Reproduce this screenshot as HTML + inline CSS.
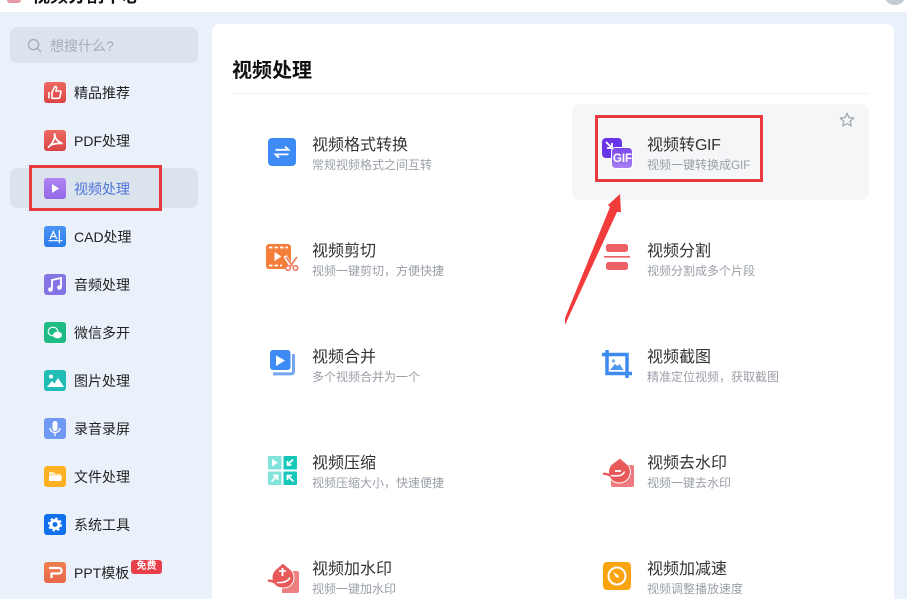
<!DOCTYPE html>
<html lang="zh"><head><meta charset="utf-8"><style>
html,body{margin:0;padding:0;width:907px;height:599px;overflow:hidden;background:#ebf1fa;font-family:"Liberation Sans","Noto Sans CJK SC",sans-serif}
#root{position:relative;width:907px;height:599px;overflow:hidden;background:#ebf1fa}
.a{position:absolute}
#top{left:0;top:0;width:907px;height:12px;background:#fff;overflow:hidden}
#panel{left:212px;top:24px;width:682px;height:590px;background:#fff;border-radius:8px}
.nav{position:absolute;left:74px;font-size:14px;line-height:20px;color:#222;white-space:nowrap}
.ic{position:absolute;left:44px;width:22px;height:21px;border-radius:3px}
.ic svg{display:block}
.t1{position:absolute;font-size:16px;line-height:22px;color:#333;white-space:nowrap}
.t2{position:absolute;font-size:12px;line-height:16px;color:#9a9fa8;white-space:nowrap}
svg.a{overflow:visible}
</style></head><body><div id="root">
<div class="a" id="top">
<div class="a" style="left:7px;top:-7px;width:14px;height:10px;border-radius:3px;background:linear-gradient(#c9c6ee,#ee8f9a)"></div>
<div class="a" style="left:32px;top:-15px;font-size:18px;line-height:22px;font-weight:bold;color:#111;white-space:nowrap">视频分割中心</div>
<div class="a" style="left:885px;top:-11px;width:20px;height:16px;border-radius:50%;background:#c3cbd3"></div>
</div>
<div class="a" id="panel"></div>

<div class="a" style="left:10px;top:27px;width:188px;height:36px;border-radius:7px;background:#dbe3ec"></div>
<svg class="a" style="left:27px;top:38px" width="15" height="15" viewBox="0 0 16 16" fill="none" stroke="#a3acb6" stroke-width="1.400"><circle cx="7" cy="7" r="5.400"/><path d="M11 11l4 4"/></svg>
<div class="a" style="left:50px;top:36px;font-size:14px;line-height:20px;color:#a5adb6">想搜什么?</div>
<div class="a" style="left:10px;top:168px;width:188px;height:40px;border-radius:7px;background:#dbe3ec"></div>

<div class="ic" style="top:82px;background:linear-gradient(#ef6a62,#da4444)"><svg width="22" height="21" viewBox="0 0 22 21" fill="none" stroke="#fff" stroke-width="1.600"><path d="M5 10v6.500M8 10l3-5.500c1.200 0 2 .9 1.600 2.200L12 9h4.200c.6 0 1 .5.8 1.200l-1.300 5.300c-.1.500-.5.800-1 .800H8z"/></svg></div>
<div class="nav" style="top:83px">精品推荐</div>
<div class="ic" style="top:130px;background:linear-gradient(#ef6a62,#da4444)"><svg width="22" height="21" viewBox="0 0 22 21" fill="none" stroke="#fff" stroke-width="1.800"><path d="M10.500 3.500c-.5 3.500 2.500 8 8 10M10.500 3.500c1.500 4-2.500 11-6.500 14M6 15.500c3-1.500 7-2.500 12.500-2"/></svg></div>
<div class="nav" style="top:131px">PDF处理</div>
<div class="ic" style="top:178px;background:linear-gradient(#b083f5,#9468e6)"><svg width="22" height="21" viewBox="0 0 22 21"><path d="M8 6l7 4.500-7 4.500z" fill="#fff"/></svg></div>
<div class="nav" style="top:179px;color:#4f74d8">视频处理</div>
<div class="ic" style="top:226px;background:linear-gradient(#4a94f5,#2a7be8)"><svg width="22" height="21" viewBox="0 0 22 21" fill="none" stroke="#fff" stroke-width="1.200"><path d="M4.500 14.700h14M15.300 4v13.500M6 13l3.300-7.500L12.700 13M7 10.500h4.700"/></svg></div>
<div class="nav" style="top:227px">CAD处理</div>
<div class="ic" style="top:274px;background:#8574e3"><svg width="22" height="21" viewBox="0 0 22 21"><path d="M8 15V6l9-2v9" fill="none" stroke="#fff" stroke-width="1.800"/><circle cx="6.500" cy="15.500" r="2.300" fill="#fff"/><circle cx="15.500" cy="13.500" r="2.300" fill="#fff"/></svg></div>
<div class="nav" style="top:275px">音频处理</div>
<div class="ic" style="top:322px;background:#1fbb85"><svg width="22" height="21" viewBox="0 0 22 21"><ellipse cx="9" cy="9.500" rx="4.800" ry="4.300" fill="none" stroke="#fff" stroke-width="1.100"/><ellipse cx="13.500" cy="13" rx="4.500" ry="3.300" fill="#fff"/></svg></div>
<div class="nav" style="top:323px">微信多开</div>
<div class="ic" style="top:370px;background:#1fbdb5"><svg width="22" height="21" viewBox="0 0 22 21" fill="#fff"><circle cx="7" cy="6.500" r="2"/><path d="M3 17l5-6 2.500 2.500L14 8l6 9z"/></svg></div>
<div class="nav" style="top:371px">图片处理</div>
<div class="ic" style="top:418px;background:#7099f5"><svg width="22" height="21" viewBox="0 0 22 21"><rect x="8.500" y="3" width="5" height="10" rx="2.500" fill="#fff"/><path d="M6 10c0 6 10 6 10 0M11 14.500V18" fill="none" stroke="#fff" stroke-width="1.300"/></svg></div>
<div class="nav" style="top:419px">录音录屏</div>
<div class="ic" style="top:466px;background:#fdb022"><svg width="22" height="21" viewBox="0 0 22 21" fill="#ffe9b8"><path d="M5 6h5l1.500 2H17v7H5z"/><path d="M5 10h13l-1 5H5z" fill="#fff"/></svg></div>
<div class="nav" style="top:467px">文件处理</div>
<div class="ic" style="top:514px;background:#1170ee"><svg width="22" height="21" viewBox="0 0 22 21"><circle cx="11" cy="10.500" r="4" fill="none" stroke="#fff" stroke-width="3"/><circle cx="11" cy="10.500" r="6.300" fill="none" stroke="#fff" stroke-width="1.500" stroke-dasharray="2.500 2.450"/></svg></div>
<div class="nav" style="top:515px">系统工具</div>
<div class="ic" style="top:562px;background:linear-gradient(#f08050,#e8694a)"><svg width="22" height="21" viewBox="0 0 22 21" fill="none" stroke="#fff" stroke-width="2.200"><path d="M5 6h10c3.500 0 3.500 5.500 0 5.500H7.500V16"/></svg></div>
<div class="nav" style="top:563px">PPT模板</div>
<div class="a" style="left:131px;top:560px;width:31px;height:14px;border-radius:3px;background:#e8404a;color:#fff;font-size:10px;line-height:14px;text-align:center;font-weight:bold">免费</div>

<div class="a" style="left:232px;top:57px;font-size:20px;line-height:28px;font-weight:bold;color:#111">视频处理</div>
<div class="a" style="left:232px;top:93px;width:637px;height:1px;background:#f0f1f3"></div>
<div class="a" style="left:572px;top:104px;width:297px;height:96px;border-radius:8px;background:#f5f6f8"></div>
<svg class="a" style="left:839px;top:112px" width="16" height="16" viewBox="0 0 16 16"><path d="M8 1.200l2 4.400 4.800.5-3.600 3.200 1 4.700L8 11.600 3.800 14l1-4.700L1.200 6.100 6 5.600z" fill="none" stroke="#9ea4ad" stroke-width="1.200" stroke-linejoin="round"/></svg>

<!-- icons: main -->
<svg class="a" style="left:268px;top:138px" width="28" height="28" viewBox="0 0 28 28"><rect width="28" height="28" rx="4" fill="#3e8bf5"/><path d="M7.500 11.800h13l-3.500-3.300M20.500 16.400h-13l3.500 3.300" fill="none" stroke="#fff" stroke-width="1.800"/></svg>
<svg class="a" style="left:266px;top:244px" width="33" height="27" viewBox="0 0 33 27"><rect width="25" height="25" rx="3" fill="#f57f3a"/><path d="M3 3.500h19M3 21.500h13" stroke="#fff" stroke-width="1.800" stroke-dasharray="3.500 2"/><path d="M8.500 8l7 4.500-7 4.500z" fill="#fff"/><path d="M19 12l7 11 6-11-6 11z" fill="none" stroke="#fff" stroke-width="3.500"/><path d="M20 13l6.500 9M31 13l-6.500 9" stroke="#ef7b63" stroke-width="1.600"/><circle cx="22" cy="24" r="2.300" fill="#fff" stroke="#ef7b63" stroke-width="1.600"/><circle cx="29.500" cy="24" r="2.300" fill="#fff" stroke="#ef7b63" stroke-width="1.600"/></svg>
<svg class="a" style="left:270px;top:350px" width="26" height="26" viewBox="0 0 26 26"><path d="M23.500 4v17.500c0 1.500-.8 2.400-2.400 2.400H3" fill="none" stroke="#76a6f2" stroke-width="3"/><rect width="20.500" height="20" rx="3" fill="#3e8bf5"/><path d="M6 5.500l9 5-9 5.500z" fill="#fff"/></svg>
<svg class="a" style="left:268px;top:456px" width="29" height="29" viewBox="0 0 29 29"><rect width="13.500" height="13.500" rx="1" fill="#82e3da"/><rect x="15.500" width="13.500" height="13.500" rx="1" fill="#14c7b8"/><rect y="15.500" width="13.500" height="13.500" rx="1" fill="#82e3da"/><rect x="15.500" y="15.500" width="13.500" height="13.500" rx="1" fill="#14c7b8"/><path d="M4 3l6 3.700L4 10.500z" fill="#fff"/><path d="M25 3.500l-5.500 5.500M19.500 5v4h4M3.500 25.500L9.500 19.500M5 19.500h4.500V24M25.500 25.500L19.500 19.500M19.500 24v-4.500H24" fill="none" stroke="#fff" stroke-width="1.800"/></svg>
<svg class="a" style="left:268px;top:563px" width="31" height="30" viewBox="0 0 31 30"><path d="M14 8h15a2 2 0 0 1 2 2v18a2 2 0 0 1-2 2H14z" fill="#ed7f7f"/><path d="M15 0L7 7C1 13 4 25 15 25 26 25 29 13 23 7z" fill="#e85a5a" stroke="#fff" stroke-width="1"/><path d="M0 18c3-1.500 5 1.500 9 1.500" fill="none" stroke="#e85a5a" stroke-width="2.400"/><path d="M9 19.500c6 .5 11-1 13-5" fill="none" stroke="#fff" stroke-width="1.400"/><path d="M11 8h7M14.500 5v8" stroke="#fff" stroke-width="1.800"/></svg>

<svg class="a" style="left:602px;top:138px" width="31" height="31" viewBox="0 0 31 31"><defs><linearGradient id="g" x1="0" y1="0" x2="0" y2="1"><stop offset="0" stop-color="#7b45ea"/><stop offset="1" stop-color="#a883f2"/></linearGradient></defs><rect width="20" height="20" rx="4" fill="#6a35e8"/><path d="M4 4l5.500 5.500M10 5v5H5" fill="none" stroke="#fff" stroke-width="1.800"/><rect x="9.500" y="9.500" width="21" height="21" rx="4" fill="url(#g)" stroke="#fff" stroke-width="1"/></svg>
<div class="a" style="left:612px;top:152px;width:21px;text-align:center;font-size:11.500px;line-height:14px;font-weight:bold;color:#fff">GIF</div>
<svg class="a" style="left:604px;top:244px" width="26" height="26" viewBox="0 0 26 26"><rect x="2" y="0" width="22" height="8" rx="2.500" fill="#ee6166"/><rect x="0" y="12" width="26" height="1.600" fill="#ee6166"/><rect x="2" y="18" width="22" height="8" rx="2.500" fill="#ee6166"/></svg>
<svg class="a" style="left:602px;top:350px" width="30" height="28" viewBox="0 0 30 28"><path d="M0 4.500h25V28M5 0v23.500H30" fill="none" stroke="#3e8bf0" stroke-width="3.500"/><circle cx="11.500" cy="11" r="1.700" fill="#7fb0f2"/><path d="M8 20l5-6 2.500 2 2-2 4 6z" fill="#4e95f0"/></svg>
<svg class="a" style="left:603px;top:458px" width="31" height="29" viewBox="0 0 31 29"><rect x="8" y="7" width="23" height="22" rx="2" fill="#ee7a7f"/><path d="M17 0L9 6C2 12 6 25 16 25 27 25 31 12 24 6z" fill="#e85a5a" stroke="#fff" stroke-width="1"/><path d="M0 16c3-1 5 1 8 1.500" fill="none" stroke="#e85a5a" stroke-width="2.400"/><path d="M8 17.500c6 1 12 .5 13.500-4" fill="none" stroke="#fff" stroke-width="1.400"/><path d="M12 13h6" stroke="#fff" stroke-width="1.800"/></svg>
<svg class="a" style="left:603px;top:562px" width="28" height="28" viewBox="0 0 28 28"><rect width="28" height="28" rx="4" fill="#fca311"/><circle cx="14" cy="14" r="8.500" fill="none" stroke="#fff" stroke-width="2"/><path d="M10 10l5 3 1 3-3-1z" fill="#fff"/></svg>

<!-- labels -->
<div class="t1" style="left:312px;top:135px">视频格式转换</div><div class="t2" style="left:312px;top:157px">常规视频格式之间互转</div>
<div class="t1" style="left:312px;top:241px">视频剪切</div><div class="t2" style="left:312px;top:263px">视频一键剪切，方便快捷</div>
<div class="t1" style="left:312px;top:347px">视频合并</div><div class="t2" style="left:312px;top:369px">多个视频合并为一个</div>
<div class="t1" style="left:312px;top:453px">视频压缩</div><div class="t2" style="left:312px;top:475px">视频压缩大小，快速便捷</div>
<div class="t1" style="left:312px;top:559px">视频加水印</div><div class="t2" style="left:312px;top:581px">视频一键加水印</div>
<div class="t1" style="left:647px;top:135px">视频转<span style="letter-spacing:-.4px">GIF</span></div><div class="t2" style="left:647px;top:157px">视频一键转换成<span style="letter-spacing:-.3px">GIF</span></div>
<div class="t1" style="left:647px;top:241px">视频分割</div><div class="t2" style="left:647px;top:263px">视频分割成多个片段</div>
<div class="t1" style="left:647px;top:347px">视频截图</div><div class="t2" style="left:647px;top:369px">精准定位视频，获取截图</div>
<div class="t1" style="left:647px;top:453px">视频去水印</div><div class="t2" style="left:647px;top:475px">视频一键去水印</div>
<div class="t1" style="left:647px;top:559px">视频加减速</div><div class="t2" style="left:647px;top:581px">视频调整播放速度</div>

<!-- annotations -->
<div class="a" style="left:29px;top:165px;width:127px;height:40px;border:3px solid #e8393f"></div>
<div class="a" style="left:595px;top:115px;width:162px;height:61px;border:3px solid #e8393f"></div>
<svg class="a" style="left:0;top:0" width="907" height="599" viewBox="0 0 907 599"><path d="M620 194L608 205 610 207 565 318 565 325 617 212 621 212z" fill="#f23c3c"/></svg>
</div></body></html>
